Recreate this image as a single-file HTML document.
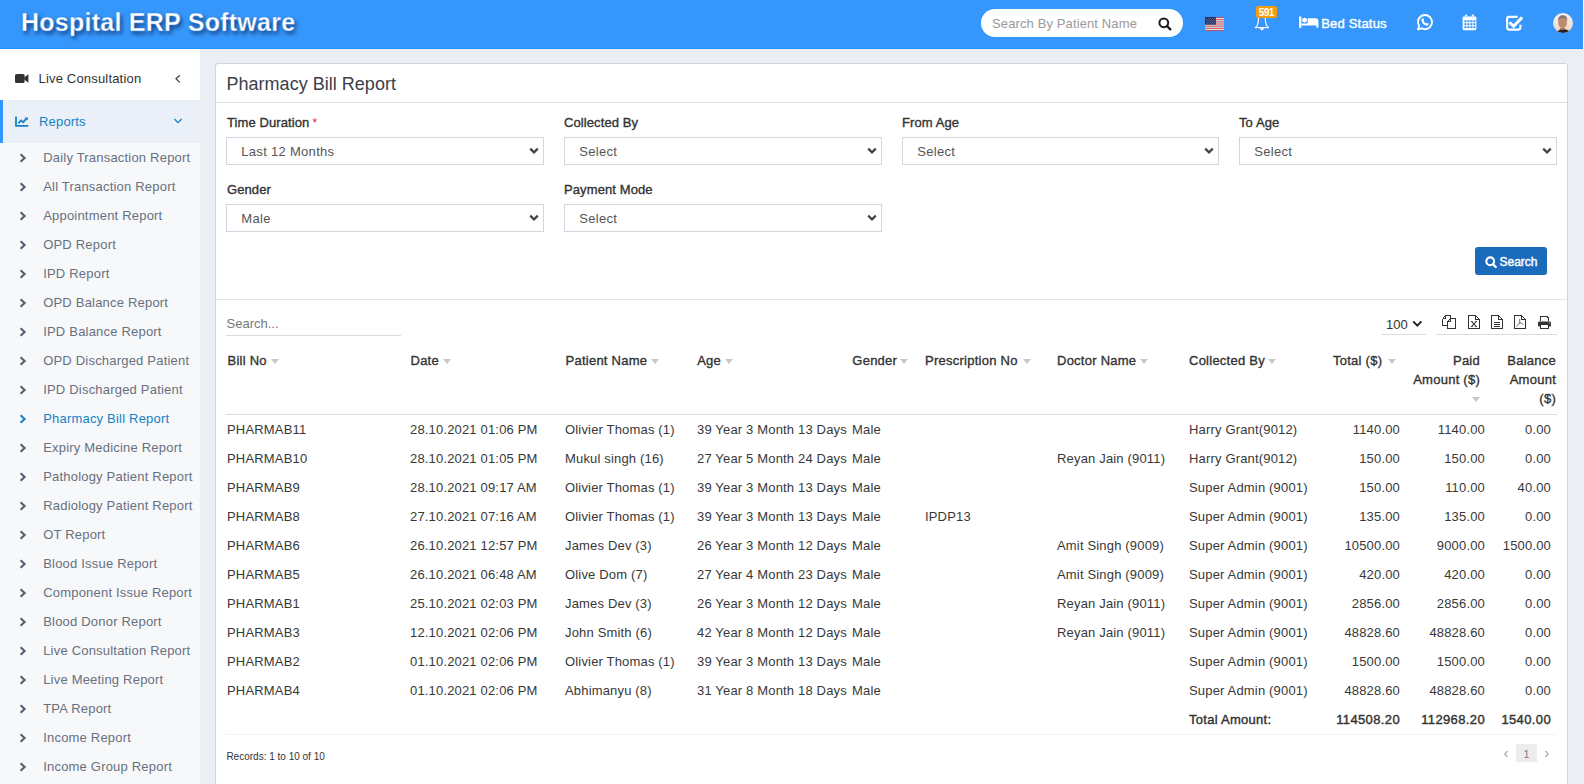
<!DOCTYPE html><html><head><meta charset="utf-8"><title>Pharmacy Bill Report</title><style>
*{margin:0;padding:0;box-sizing:border-box}
html,body{width:1584px;height:784px;overflow:hidden}
body{background:#ebeef2;font-family:"Liberation Sans",sans-serif;font-size:13px;color:#333;position:relative}
.abs{position:absolute}
#hdr{position:absolute;left:0;top:0;width:1583px;height:49px;background:#3597fc;border-bottom:1px solid #2192fd}
#hdrR{position:absolute;left:1583px;top:0;width:1px;height:49px;background:#f4f4f4}
#logo{position:absolute;left:21px;top:9.6px;font-size:25px;line-height:25px;font-weight:bold;color:#fff;letter-spacing:0.25px;text-shadow:2px 2.5px 4px rgba(0,0,40,0.6);-webkit-text-stroke:0.35px #3a8fe8;white-space:nowrap}
#spill{position:absolute;left:981px;top:9px;width:202px;height:28px;background:#fff;border-radius:14px}
#sph{position:absolute;left:992px;top:16.9px;font-size:13px;line-height:13px;color:#9a9a9a;letter-spacing:0.12px;white-space:nowrap}
#badge{position:absolute;left:1256px;top:6px;width:21px;height:12px;background:#fb9c0e;border-radius:2.5px;color:#fff;font-size:10px;line-height:13.8px;font-weight:bold;text-align:center;letter-spacing:-0.6px;text-indent:-0.6px;overflow:hidden}
#bedtxt{position:absolute;left:1321.2px;top:16.8px;font-size:13px;line-height:13px;color:#fff;letter-spacing:0.2px;-webkit-text-stroke:0.4px #fff;white-space:nowrap}
#side{position:absolute;left:0;top:49px;width:200px;height:735px;background:#f7f8fa}
#side .live{position:absolute;left:0;top:0;width:200px;height:51px;background:#fff}
#side .rep{position:absolute;left:0;top:51px;width:200px;height:43px;background:#ebeff7}
#side .bar{position:absolute;left:0;top:51px;width:3px;height:43px;background:#3196fd}
.stxt{position:absolute;font-size:13px;line-height:13px;white-space:nowrap;letter-spacing:0.18px}
#menu .mi{position:absolute;left:0;height:13px;width:200px;font-size:13px;line-height:13px;color:#687080;white-space:nowrap;letter-spacing:0.2px}
#menu .mi span{position:absolute;left:43.2px;top:0}
#menu .mi .chev{position:absolute;left:18.9px;top:2.2px;color:#555d6c}
#menu .mi.act{color:#1482c4}
#menu .mi.act .chev{color:#1482c4}
#box{position:absolute;left:215px;top:63px;width:1353px;height:760px;background:#fff;border:1px solid #c9d7df;border-radius:3px}
#title{position:absolute;left:226.5px;top:74.6px;font-size:18px;line-height:18px;color:#3b4049;white-space:nowrap;letter-spacing:0.02px}
.hline{position:absolute;height:1px}
.lbl{position:absolute;font-size:13px;line-height:13px;color:#333;white-space:nowrap;letter-spacing:0.1px;-webkit-text-stroke:0.35px #333}
.req{color:#e8203c;-webkit-text-stroke:0;font-size:12px;margin-left:3px}
.sel{position:absolute;height:28px;width:318px;border:1px solid #d2d6de;background:#fff}
.sel span{position:absolute;left:14.3px;top:7.0px;font-size:13px;line-height:13px;color:#555;letter-spacing:0.3px;white-space:nowrap}
.sel svg{position:absolute;right:4px;top:9.3px}
#btn{position:absolute;left:1475px;top:247px;width:72px;height:28px;background:#1b6bbd;border-radius:3px}
#btntxt{position:absolute;left:1499.5px;top:255.8px;font-size:12px;line-height:12px;color:#fff;letter-spacing:0px;-webkit-text-stroke:0.4px #fff;white-space:nowrap}
#tsearch{position:absolute;left:226.5px;top:316.8px;font-size:13px;line-height:13px;color:#777;white-space:nowrap}
.th{position:absolute;font-size:13px;line-height:13px;color:#333;white-space:nowrap;letter-spacing:0.25px;-webkit-text-stroke:0.35px #333}
.tri{position:absolute;width:0;height:0;border-left:4px solid transparent;border-right:4px solid transparent;border-top:5px solid #c8c8c8}
.td{position:absolute;font-size:13px;line-height:13px;color:#383838;white-space:nowrap;letter-spacing:0.17px}
.td.tr{text-align:right}
.td.tot{color:#333;letter-spacing:0.27px;-webkit-text-stroke:0.4px #333}
.td.tr.tot{letter-spacing:0.37px}
#recs{position:absolute;left:226.4px;top:751.5px;font-size:10px;line-height:10px;color:#333;white-space:nowrap}
#pg1{position:absolute;left:1516px;top:744px;width:21px;height:18px;background:#ececec;color:#777;font-size:10px;line-height:21px;text-align:center;overflow:hidden}

</style></head><body>
<div id="hdr"></div><div id="hdrR"></div>
<div id="logo">Hospital ERP Software</div>
<div id="spill"></div>
<div id="sph">Search By Patient Name</div>
<svg class="abs" style="left:1157px;top:16px" width="16" height="16" viewBox="0 0 16 16"><circle cx="6.8" cy="6.8" r="4.4" fill="none" stroke="#1a1a1a" stroke-width="2.0"/><path d="M10 10 L13.3 13.3" stroke="#1a1a1a" stroke-width="2.4" stroke-linecap="round"/></svg>
<svg class="abs" style="left:1205px;top:17px" width="19" height="14" viewBox="0 0 19 14"><rect width="19" height="14" fill="#ecebf2"/><g fill="#c2505a"><rect y="0" width="19" height="1.08"/><rect y="2.15" width="19" height="1.08"/><rect y="4.3" width="19" height="1.08"/><rect y="6.46" width="19" height="1.08"/><rect y="8.6" width="19" height="1.08"/><rect y="10.77" width="19" height="1.08"/><rect y="12.92" width="19" height="1.08"/></g><rect width="10.8" height="7.6" fill="#24305e"/><g fill="#8a93b8"><rect x="1.2" y="1.2" width="0.7" height="0.7"/><rect x="3.2" y="1.2" width="0.7" height="0.7"/><rect x="5.2" y="1.2" width="0.7" height="0.7"/><rect x="7.2" y="1.2" width="0.7" height="0.7"/><rect x="9.2" y="1.2" width="0.7" height="0.7"/><rect x="1.2" y="3.2" width="0.7" height="0.7"/><rect x="3.2" y="3.2" width="0.7" height="0.7"/><rect x="5.2" y="3.2" width="0.7" height="0.7"/><rect x="7.2" y="3.2" width="0.7" height="0.7"/><rect x="9.2" y="3.2" width="0.7" height="0.7"/><rect x="1.2" y="5.2" width="0.7" height="0.7"/><rect x="3.2" y="5.2" width="0.7" height="0.7"/><rect x="5.2" y="5.2" width="0.7" height="0.7"/><rect x="7.2" y="5.2" width="0.7" height="0.7"/><rect x="9.2" y="5.2" width="0.7" height="0.7"/><rect x="2.2" y="2.2" width="0.7" height="0.7"/><rect x="4.2" y="2.2" width="0.7" height="0.7"/><rect x="6.2" y="2.2" width="0.7" height="0.7"/><rect x="8.2" y="2.2" width="0.7" height="0.7"/><rect x="2.2" y="4.2" width="0.7" height="0.7"/><rect x="4.2" y="4.2" width="0.7" height="0.7"/><rect x="6.2" y="4.2" width="0.7" height="0.7"/><rect x="8.2" y="4.2" width="0.7" height="0.7"/><rect x="2.2" y="6.2" width="0.7" height="0.7"/><rect x="4.2" y="6.2" width="0.7" height="0.7"/><rect x="6.2" y="6.2" width="0.7" height="0.7"/><rect x="8.2" y="6.2" width="0.7" height="0.7"/></g></svg>
<svg class="abs" style="left:1254px;top:14px" width="16" height="17" viewBox="0 0 16 17"><path d="M5.2 2 C4.6 3 4.4 5 4.2 8 C4 10.6 3.4 12 1.6 13.5 L14.2 13.5 C12.4 12 11.8 10.6 11.6 8 C11.4 5 11.2 3 10.6 2" fill="none" stroke="#fff" stroke-width="1.2" stroke-linejoin="round"/><path d="M0.8 13.1 L15 13.1 L15 14.2 L0.8 14.2 Z" fill="#fff"/><path d="M6 14.2 L9.8 14.2 C9.6 15.6 8.8 16.3 7.9 16.3 C7 16.3 6.2 15.6 6 14.2 Z" fill="#fff"/></svg>
<div id="badge">591</div>
<svg class="abs" style="left:1299px;top:16px" width="20" height="12" viewBox="0 0 20 12"><rect x="0" y="0.5" width="2.4" height="11.3" fill="#fff"/><circle cx="5.6" cy="4.2" r="2.4" fill="#fff"/><path d="M8.6 2.2 L16.8 2.2 C18.4 2.2 19.4 3.4 19.4 5 L19.4 11.8 L17.4 11.8 L17.4 9.6 L2.4 9.6 L2.4 7.4 L8.6 7.4 Z" fill="#fff"/></svg>
<div id="bedtxt">Bed Status</div>
<svg class="abs" style="left:1416px;top:13px" width="18" height="18" viewBox="0 0 18 18"><path d="M9 2 C5.1 2 2 5.1 2 9 C2 10.3 2.4 11.6 3.1 12.7 L2 16.4 L5.7 15.3 C6.7 15.9 7.8 16.2 9 16.2 C12.9 16.2 16 13.1 16 9.1 C16 5.1 12.9 2 9 2 Z" fill="none" stroke="#fff" stroke-width="1.9" stroke-linejoin="round"/><path d="M6.1 5.5 C6.6 5.1 7.2 5.2 7.4 5.7 L8 7.1 C8.1 7.5 7.9 7.8 7.6 8.1 C8 9 8.9 9.9 9.9 10.4 C10.2 10.1 10.5 9.8 10.9 9.9 L12.3 10.6 C12.7 10.8 12.8 11.3 12.5 11.8 C11.9 12.6 11 12.9 9.8 12.5 C7.8 11.8 6.2 10.2 5.6 8.2 C5.3 7 5.5 6 6.1 5.5 Z" fill="#fff"/></svg>
<svg class="abs" style="left:1462px;top:14px" width="15" height="17" viewBox="0 0 15 17"><rect x="0.6" y="2.4" width="13.8" height="13.8" rx="1.4" fill="#fff"/><rect x="3" y="0.6" width="2.2" height="3.6" rx="1" fill="#fff"/><rect x="9.8" y="0.6" width="2.2" height="3.6" rx="1" fill="#fff"/><rect x="3.8" y="2.2" width="0.7" height="1.6" fill="#5aaaf5"/><rect x="10.6" y="2.2" width="0.7" height="1.6" fill="#8a8af0"/><g fill="#3597fc"><rect x="2.4" y="6.2" width="2" height="2"/><rect x="5.4" y="6.2" width="2" height="2"/><rect x="8.4" y="6.2" width="2" height="2"/><rect x="11.4" y="6.2" width="2" height="2"/><rect x="2.4" y="9.2" width="2" height="2"/><rect x="5.4" y="9.2" width="2" height="2"/><rect x="8.4" y="9.2" width="2" height="2"/><rect x="11.4" y="9.2" width="2" height="2"/><rect x="2.4" y="12.2" width="2" height="2"/><rect x="5.4" y="12.2" width="2" height="2"/><rect x="8.4" y="12.2" width="2" height="2"/><rect x="11.4" y="12.2" width="2" height="2"/></g></svg>
<svg class="abs" style="left:1505px;top:15px" width="20" height="16" viewBox="0 0 20 16"><path d="M15.4 9.8 L15.4 12.6 C15.4 13.8 14.6 14.6 13.4 14.6 L4 14.6 C2.8 14.6 2.1 13.8 2.1 12.6 L2.1 3.8 C2.1 2.6 2.8 1.9 4 1.9 L12.6 1.9" fill="none" stroke="#fff" stroke-width="2.1"/><path d="M4.4 7.4 L8.6 11.2 L17.2 2.4" fill="none" stroke="#fff" stroke-width="3"/></svg>
<svg class="abs" style="left:1553px;top:13px" width="20" height="20" viewBox="0 0 20 20"><defs><clipPath id="av"><circle cx="10" cy="10" r="10"/></clipPath><linearGradient id="avbg" x1="0" y1="0" x2="0" y2="1"><stop offset="0" stop-color="#f4f1ee"/><stop offset="0.6" stop-color="#f3e3d8"/><stop offset="1" stop-color="#e9c6bd"/></linearGradient></defs><g clip-path="url(#av)"><rect width="20" height="20" fill="url(#avbg)"/><path d="M7 15 L12 15 L12.5 18 L6.5 18 Z" fill="#b07e62"/><ellipse cx="9.6" cy="9.4" rx="4.4" ry="5.9" fill="#bb8e72"/><path d="M5 8 C4.8 4 7 2.2 9.8 2.2 C12.6 2.2 14.6 4 14.4 8 C13.6 6 12 5 9.8 5 C7.6 5 5.8 6 5 8 Z" fill="#857570"/><path d="M4 20 C5 17 7 16.4 9 17 C11 16 14.5 16 16.5 18.5 L17 20 Z" fill="#2a201c"/></g></svg>

<div id="side"><div class="live"></div><div class="rep"></div><div class="bar"></div></div>
<svg class="abs" style="left:15px;top:73px" width="14" height="11" viewBox="0 0 14 11"><rect x="0" y="1" width="9.6" height="9" rx="1.6" fill="#333"/><path d="M9.4 4.2 L13.4 1.2 L13.4 9.8 L9.4 6.8 Z" fill="#333"/></svg>
<div class="stxt" style="left:38.5px;top:72px;color:#333">Live Consultation</div>
<svg class="abs" style="left:174px;top:74px" width="8" height="10" viewBox="0 0 8 10"><path d="M5.8 1.2 L2 4.8 L5.8 8.4" fill="none" stroke="#444" stroke-width="1.3"/></svg>
<svg class="abs" style="left:15px;top:116px" width="14" height="11" viewBox="0 0 14 11"><path d="M1 0.4 L1 9.8 L13.4 9.8" fill="none" stroke="#1482c4" stroke-width="1.8"/><path d="M3.4 7.4 L6 4.4 L8.2 6.2 L11.6 2.4" fill="none" stroke="#1482c4" stroke-width="1.8"/><path d="M9.6 1.4 L12.8 1.4 L12.8 4.6 Z" fill="#1482c4"/></svg>
<div class="stxt" style="left:39px;top:115px;color:#1482c4">Reports</div>
<svg class="abs" style="left:173px;top:117px" width="10" height="8" viewBox="0 0 10 8"><path d="M1.4 2 L5 5.6 L8.6 2" fill="none" stroke="#1482c4" stroke-width="1.3"/></svg>

<div id="box"></div>
<div id="title">Pharmacy Bill Report</div>
<div class="hline" style="left:216px;top:102px;width:1351px;background:#d8e1e6"></div>

<div class="lbl" style="left:227px;top:115.7px">Time Duration<span class="req">*</span></div>
<div class="lbl" style="left:564px;top:115.7px">Collected By</div>
<div class="lbl" style="left:902px;top:115.7px">From Age</div>
<div class="lbl" style="left:1239px;top:115.7px">To Age</div>
<div class="lbl" style="left:227px;top:183px">Gender</div>
<div class="lbl" style="left:564px;top:183px">Payment Mode</div>

<div class="sel" style="left:226px;top:137px"><span>Last 12 Months</span><svg width="10" height="8" viewBox="0 0 10 8"><path d="M1.2 1.6 L5 5.4 L8.8 1.6" fill="none" stroke="#444" stroke-width="2.2"/></svg></div>
<div class="sel" style="left:564px;top:137px"><span>Select</span><svg width="10" height="8" viewBox="0 0 10 8"><path d="M1.2 1.6 L5 5.4 L8.8 1.6" fill="none" stroke="#444" stroke-width="2.2"/></svg></div>
<div class="sel" style="left:902px;top:137px;width:317px"><span>Select</span><svg width="10" height="8" viewBox="0 0 10 8"><path d="M1.2 1.6 L5 5.4 L8.8 1.6" fill="none" stroke="#444" stroke-width="2.2"/></svg></div>
<div class="sel" style="left:1239px;top:137px"><span>Select</span><svg width="10" height="8" viewBox="0 0 10 8"><path d="M1.2 1.6 L5 5.4 L8.8 1.6" fill="none" stroke="#444" stroke-width="2.2"/></svg></div>
<div class="sel" style="left:226px;top:204px"><span>Male</span><svg width="10" height="8" viewBox="0 0 10 8"><path d="M1.2 1.6 L5 5.4 L8.8 1.6" fill="none" stroke="#444" stroke-width="2.2"/></svg></div>
<div class="sel" style="left:564px;top:204px"><span>Select</span><svg width="10" height="8" viewBox="0 0 10 8"><path d="M1.2 1.6 L5 5.4 L8.8 1.6" fill="none" stroke="#444" stroke-width="2.2"/></svg></div>

<div id="btn"></div>
<svg class="abs" style="left:1484px;top:255px" width="14" height="14" viewBox="0 0 14 14"><circle cx="6.2" cy="6.3" r="3.9" fill="none" stroke="#fff" stroke-width="2.1"/><path d="M9 9.2 L11.8 12" stroke="#fff" stroke-width="2.3" stroke-linecap="round"/></svg>
<div id="btntxt">Search</div>
<div class="hline" style="left:216px;top:299px;width:1351px;background:#dfe6ea"></div>

<div id="tsearch">Search...</div>
<div class="hline" style="left:226px;top:335px;width:175px;background:#dcdcdc"></div>
<div class="abs" style="left:1386px;top:318px;font-size:13px;line-height:13px;color:#333">100</div>
<svg class="abs" style="left:1412px;top:320px" width="11" height="8" viewBox="0 0 11 8"><path d="M1.2 1.4 L5.3 5.6 L9.4 1.4" fill="none" stroke="#222" stroke-width="2"/></svg>
<div class="hline" style="left:1381px;top:334px;width:45px;background:#dcdcdc"></div>
<div class="hline" style="left:1436px;top:334px;width:121px;background:#dcdcdc"></div>
<svg class="abs" style="left:1442px;top:315px" width="15" height="15" viewBox="0 0 15 15" shape-rendering="crispEdges"><path d="M0.5 3.5 L3.5 0.5 L8.5 0.5 L8.5 2.5 M0.5 3.5 L0.5 10.5 L5.5 10.5 M0.5 3.5 L3.5 3.5 L3.5 0.5" fill="none" stroke="#333" stroke-width="1"/><path d="M5.5 6.5 L8.5 3.5 L13.5 3.5 L13.5 13.5 L5.5 13.5 Z M5.5 6.5 L8.5 6.5 L8.5 3.5" fill="none" stroke="#333" stroke-width="1"/></svg>
<svg class="abs" style="left:1468px;top:315px" width="13" height="15" viewBox="0 0 13 15"><path d="M0.5 0.5 L7.5 0.5 L11.5 4.5 L11.5 13.5 L0.5 13.5 Z M7.5 0.5 L7.5 4.5 L11.5 4.5" fill="none" stroke="#333" stroke-width="1" shape-rendering="crispEdges"/><path d="M3.6 6.5 L8.2 11.6 M8.2 6.5 L3.6 11.6" stroke="#333" stroke-width="1.1"/><path d="M2.8 6.5 L4.6 6.5 M7.2 6.5 L9 6.5 M2.8 11.6 L4.6 11.6 M7.2 11.6 L9 11.6" stroke="#333" stroke-width="0.9"/></svg>
<svg class="abs" style="left:1491px;top:315px" width="13" height="15" viewBox="0 0 13 15" shape-rendering="crispEdges"><path d="M0.5 0.5 L7.5 0.5 L11.5 4.5 L11.5 13.5 L0.5 13.5 Z M7.5 0.5 L7.5 4.5 L11.5 4.5" fill="none" stroke="#333" stroke-width="1"/><path d="M3 7.5 L9 7.5 M3 9.5 L9 9.5 M3 11.5 L9 11.5" stroke="#333" stroke-width="1"/></svg>
<svg class="abs" style="left:1514px;top:315px" width="13" height="15" viewBox="0 0 13 15"><path d="M0.5 0.5 L7.5 0.5 L11.5 4.5 L11.5 13.5 L0.5 13.5 Z M7.5 0.5 L7.5 4.5 L11.5 4.5" fill="none" stroke="#333" stroke-width="1" shape-rendering="crispEdges"/><path d="M5.6 4 L5.8 7.6 L2.4 11.6 M5.8 7.6 L9.6 9.6 M5.8 7.6 L5.2 9" fill="none" stroke="#555" stroke-width="0.8"/></svg>
<svg class="abs" style="left:1538px;top:316px" width="13" height="14" viewBox="0 0 13 14"><path d="M2.5 5 L2.5 0.5 L9 0.5 L10.5 2 L10.5 5" fill="none" stroke="#333" stroke-width="1" shape-rendering="crispEdges"/><rect x="0" y="5.6" width="13" height="4.8" rx="1" fill="#333"/><path d="M2.5 9 L2.5 12.5 L10.5 12.5 L10.5 9" fill="#fff" stroke="#333" stroke-width="1" shape-rendering="crispEdges"/><rect x="11" y="6.6" width="1" height="1" fill="#bbb"/></svg>
<div class="th" style="left:227.5px;top:354px">Bill No</div><div class="tri" style="left:271px;top:359px"></div>
<div class="th" style="left:410.5px;top:354px">Date</div><div class="tri" style="left:443px;top:359px"></div>
<div class="th" style="left:565.5px;top:354px">Patient Name</div><div class="tri" style="left:651px;top:359px"></div>
<div class="th" style="left:697.2px;top:354px">Age</div><div class="tri" style="left:725px;top:359px"></div>
<div class="th" style="left:852.3px;top:354px">Gender</div><div class="tri" style="left:900px;top:359px"></div>
<div class="th" style="left:925px;top:354px">Prescription No</div><div class="tri" style="left:1023px;top:359px"></div>
<div class="th" style="left:1057px;top:354px">Doctor Name</div><div class="tri" style="left:1140px;top:359px"></div>
<div class="th" style="left:1189px;top:354px">Collected By</div><div class="tri" style="left:1268px;top:359px"></div>
<div class="th" style="left:1333px;top:354px">Total ($)</div><div class="tri" style="left:1387.5px;top:359px"></div>
<div class="th" style="right:104px;top:354px;text-align:right">Paid</div>
<div class="th" style="right:104px;top:373px;text-align:right">Amount ($)</div>
<div class="tri" style="left:1472px;top:397px"></div>
<div class="th" style="right:28px;top:354px;text-align:right">Balance</div>
<div class="th" style="right:28px;top:373px;text-align:right">Amount</div>
<div class="th" style="right:28px;top:392px;text-align:right">($)</div>
<div class="hline" style="left:226px;top:414px;width:1331px;background:#dddddd"></div>
<div class="hline" style="left:226px;top:734px;width:1331px;background:#f2f2f2"></div>
<div id="recs">Records: 1 to 10 of 10</div>
<svg class="abs" style="left:1503px;top:750px" width="6" height="8" viewBox="0 0 6 8"><path d="M4.6 1 L1.6 4 L4.6 7" fill="none" stroke="#777" stroke-width="1"/></svg>
<div id="pg1">1</div>
<svg class="abs" style="left:1544px;top:750px" width="6" height="8" viewBox="0 0 6 8"><path d="M1.4 1 L4.4 4 L1.4 7" fill="none" stroke="#777" stroke-width="1"/></svg>

<div id="menu"><div class="mi" style="top:150.70px"><svg class="chev" width="8" height="10" viewBox="0 0 8 10"><path d="M1.6 1.2 L5.6 5 L1.6 8.8" fill="none" stroke="currentColor" stroke-width="2.1"/></svg><span>Daily Transaction Report</span></div><div class="mi" style="top:179.70px"><svg class="chev" width="8" height="10" viewBox="0 0 8 10"><path d="M1.6 1.2 L5.6 5 L1.6 8.8" fill="none" stroke="currentColor" stroke-width="2.1"/></svg><span>All Transaction Report</span></div><div class="mi" style="top:208.70px"><svg class="chev" width="8" height="10" viewBox="0 0 8 10"><path d="M1.6 1.2 L5.6 5 L1.6 8.8" fill="none" stroke="currentColor" stroke-width="2.1"/></svg><span>Appointment Report</span></div><div class="mi" style="top:237.70px"><svg class="chev" width="8" height="10" viewBox="0 0 8 10"><path d="M1.6 1.2 L5.6 5 L1.6 8.8" fill="none" stroke="currentColor" stroke-width="2.1"/></svg><span>OPD Report</span></div><div class="mi" style="top:266.70px"><svg class="chev" width="8" height="10" viewBox="0 0 8 10"><path d="M1.6 1.2 L5.6 5 L1.6 8.8" fill="none" stroke="currentColor" stroke-width="2.1"/></svg><span>IPD Report</span></div><div class="mi" style="top:295.70px"><svg class="chev" width="8" height="10" viewBox="0 0 8 10"><path d="M1.6 1.2 L5.6 5 L1.6 8.8" fill="none" stroke="currentColor" stroke-width="2.1"/></svg><span>OPD Balance Report</span></div><div class="mi" style="top:324.70px"><svg class="chev" width="8" height="10" viewBox="0 0 8 10"><path d="M1.6 1.2 L5.6 5 L1.6 8.8" fill="none" stroke="currentColor" stroke-width="2.1"/></svg><span>IPD Balance Report</span></div><div class="mi" style="top:353.70px"><svg class="chev" width="8" height="10" viewBox="0 0 8 10"><path d="M1.6 1.2 L5.6 5 L1.6 8.8" fill="none" stroke="currentColor" stroke-width="2.1"/></svg><span>OPD Discharged Patient</span></div><div class="mi" style="top:382.70px"><svg class="chev" width="8" height="10" viewBox="0 0 8 10"><path d="M1.6 1.2 L5.6 5 L1.6 8.8" fill="none" stroke="currentColor" stroke-width="2.1"/></svg><span>IPD Discharged Patient</span></div><div class="mi act" style="top:411.70px"><svg class="chev" width="8" height="10" viewBox="0 0 8 10"><path d="M1.6 1.2 L5.6 5 L1.6 8.8" fill="none" stroke="currentColor" stroke-width="2.1"/></svg><span>Pharmacy Bill Report</span></div><div class="mi" style="top:440.70px"><svg class="chev" width="8" height="10" viewBox="0 0 8 10"><path d="M1.6 1.2 L5.6 5 L1.6 8.8" fill="none" stroke="currentColor" stroke-width="2.1"/></svg><span>Expiry Medicine Report</span></div><div class="mi" style="top:469.70px"><svg class="chev" width="8" height="10" viewBox="0 0 8 10"><path d="M1.6 1.2 L5.6 5 L1.6 8.8" fill="none" stroke="currentColor" stroke-width="2.1"/></svg><span>Pathology Patient Report</span></div><div class="mi" style="top:498.70px"><svg class="chev" width="8" height="10" viewBox="0 0 8 10"><path d="M1.6 1.2 L5.6 5 L1.6 8.8" fill="none" stroke="currentColor" stroke-width="2.1"/></svg><span>Radiology Patient Report</span></div><div class="mi" style="top:527.70px"><svg class="chev" width="8" height="10" viewBox="0 0 8 10"><path d="M1.6 1.2 L5.6 5 L1.6 8.8" fill="none" stroke="currentColor" stroke-width="2.1"/></svg><span>OT Report</span></div><div class="mi" style="top:556.70px"><svg class="chev" width="8" height="10" viewBox="0 0 8 10"><path d="M1.6 1.2 L5.6 5 L1.6 8.8" fill="none" stroke="currentColor" stroke-width="2.1"/></svg><span>Blood Issue Report</span></div><div class="mi" style="top:585.70px"><svg class="chev" width="8" height="10" viewBox="0 0 8 10"><path d="M1.6 1.2 L5.6 5 L1.6 8.8" fill="none" stroke="currentColor" stroke-width="2.1"/></svg><span>Component Issue Report</span></div><div class="mi" style="top:614.70px"><svg class="chev" width="8" height="10" viewBox="0 0 8 10"><path d="M1.6 1.2 L5.6 5 L1.6 8.8" fill="none" stroke="currentColor" stroke-width="2.1"/></svg><span>Blood Donor Report</span></div><div class="mi" style="top:643.70px"><svg class="chev" width="8" height="10" viewBox="0 0 8 10"><path d="M1.6 1.2 L5.6 5 L1.6 8.8" fill="none" stroke="currentColor" stroke-width="2.1"/></svg><span>Live Consultation Report</span></div><div class="mi" style="top:672.70px"><svg class="chev" width="8" height="10" viewBox="0 0 8 10"><path d="M1.6 1.2 L5.6 5 L1.6 8.8" fill="none" stroke="currentColor" stroke-width="2.1"/></svg><span>Live Meeting Report</span></div><div class="mi" style="top:701.70px"><svg class="chev" width="8" height="10" viewBox="0 0 8 10"><path d="M1.6 1.2 L5.6 5 L1.6 8.8" fill="none" stroke="currentColor" stroke-width="2.1"/></svg><span>TPA Report</span></div><div class="mi" style="top:730.70px"><svg class="chev" width="8" height="10" viewBox="0 0 8 10"><path d="M1.6 1.2 L5.6 5 L1.6 8.8" fill="none" stroke="currentColor" stroke-width="2.1"/></svg><span>Income Report</span></div><div class="mi" style="top:759.70px"><svg class="chev" width="8" height="10" viewBox="0 0 8 10"><path d="M1.6 1.2 L5.6 5 L1.6 8.8" fill="none" stroke="currentColor" stroke-width="2.1"/></svg><span>Income Group Report</span></div></div>
<div id="tbody"><div class="td" style="left:227px;top:422.80px">PHARMAB11</div><div class="td" style="left:410px;top:422.80px">28.10.2021 01:06 PM</div><div class="td" style="left:565px;top:422.80px">Olivier Thomas (1)</div><div class="td" style="left:697px;top:422.80px">39 Year 3 Month 13 Days</div><div class="td" style="left:852px;top:422.80px">Male</div><div class="td" style="left:1189px;top:422.80px">Harry Grant(9012)</div><div class="td tr" style="right:184px;top:422.80px">1140.00</div><div class="td tr" style="right:99px;top:422.80px">1140.00</div><div class="td tr" style="right:33px;top:422.80px">0.00</div><div class="td" style="left:227px;top:451.80px">PHARMAB10</div><div class="td" style="left:410px;top:451.80px">28.10.2021 01:05 PM</div><div class="td" style="left:565px;top:451.80px">Mukul singh (16)</div><div class="td" style="left:697px;top:451.80px">27 Year 5 Month 24 Days</div><div class="td" style="left:852px;top:451.80px">Male</div><div class="td" style="left:1057px;top:451.80px">Reyan Jain (9011)</div><div class="td" style="left:1189px;top:451.80px">Harry Grant(9012)</div><div class="td tr" style="right:184px;top:451.80px">150.00</div><div class="td tr" style="right:99px;top:451.80px">150.00</div><div class="td tr" style="right:33px;top:451.80px">0.00</div><div class="td" style="left:227px;top:480.80px">PHARMAB9</div><div class="td" style="left:410px;top:480.80px">28.10.2021 09:17 AM</div><div class="td" style="left:565px;top:480.80px">Olivier Thomas (1)</div><div class="td" style="left:697px;top:480.80px">39 Year 3 Month 13 Days</div><div class="td" style="left:852px;top:480.80px">Male</div><div class="td" style="left:1189px;top:480.80px">Super Admin (9001)</div><div class="td tr" style="right:184px;top:480.80px">150.00</div><div class="td tr" style="right:99px;top:480.80px">110.00</div><div class="td tr" style="right:33px;top:480.80px">40.00</div><div class="td" style="left:227px;top:509.80px">PHARMAB8</div><div class="td" style="left:410px;top:509.80px">27.10.2021 07:16 AM</div><div class="td" style="left:565px;top:509.80px">Olivier Thomas (1)</div><div class="td" style="left:697px;top:509.80px">39 Year 3 Month 13 Days</div><div class="td" style="left:852px;top:509.80px">Male</div><div class="td" style="left:925px;top:509.80px">IPDP13</div><div class="td" style="left:1189px;top:509.80px">Super Admin (9001)</div><div class="td tr" style="right:184px;top:509.80px">135.00</div><div class="td tr" style="right:99px;top:509.80px">135.00</div><div class="td tr" style="right:33px;top:509.80px">0.00</div><div class="td" style="left:227px;top:538.80px">PHARMAB6</div><div class="td" style="left:410px;top:538.80px">26.10.2021 12:57 PM</div><div class="td" style="left:565px;top:538.80px">James Dev (3)</div><div class="td" style="left:697px;top:538.80px">26 Year 3 Month 12 Days</div><div class="td" style="left:852px;top:538.80px">Male</div><div class="td" style="left:1057px;top:538.80px">Amit Singh (9009)</div><div class="td" style="left:1189px;top:538.80px">Super Admin (9001)</div><div class="td tr" style="right:184px;top:538.80px">10500.00</div><div class="td tr" style="right:99px;top:538.80px">9000.00</div><div class="td tr" style="right:33px;top:538.80px">1500.00</div><div class="td" style="left:227px;top:567.80px">PHARMAB5</div><div class="td" style="left:410px;top:567.80px">26.10.2021 06:48 AM</div><div class="td" style="left:565px;top:567.80px">Olive Dom (7)</div><div class="td" style="left:697px;top:567.80px">27 Year 4 Month 23 Days</div><div class="td" style="left:852px;top:567.80px">Male</div><div class="td" style="left:1057px;top:567.80px">Amit Singh (9009)</div><div class="td" style="left:1189px;top:567.80px">Super Admin (9001)</div><div class="td tr" style="right:184px;top:567.80px">420.00</div><div class="td tr" style="right:99px;top:567.80px">420.00</div><div class="td tr" style="right:33px;top:567.80px">0.00</div><div class="td" style="left:227px;top:596.80px">PHARMAB1</div><div class="td" style="left:410px;top:596.80px">25.10.2021 02:03 PM</div><div class="td" style="left:565px;top:596.80px">James Dev (3)</div><div class="td" style="left:697px;top:596.80px">26 Year 3 Month 12 Days</div><div class="td" style="left:852px;top:596.80px">Male</div><div class="td" style="left:1057px;top:596.80px">Reyan Jain (9011)</div><div class="td" style="left:1189px;top:596.80px">Super Admin (9001)</div><div class="td tr" style="right:184px;top:596.80px">2856.00</div><div class="td tr" style="right:99px;top:596.80px">2856.00</div><div class="td tr" style="right:33px;top:596.80px">0.00</div><div class="td" style="left:227px;top:625.80px">PHARMAB3</div><div class="td" style="left:410px;top:625.80px">12.10.2021 02:06 PM</div><div class="td" style="left:565px;top:625.80px">John Smith (6)</div><div class="td" style="left:697px;top:625.80px">42 Year 8 Month 12 Days</div><div class="td" style="left:852px;top:625.80px">Male</div><div class="td" style="left:1057px;top:625.80px">Reyan Jain (9011)</div><div class="td" style="left:1189px;top:625.80px">Super Admin (9001)</div><div class="td tr" style="right:184px;top:625.80px">48828.60</div><div class="td tr" style="right:99px;top:625.80px">48828.60</div><div class="td tr" style="right:33px;top:625.80px">0.00</div><div class="td" style="left:227px;top:654.80px">PHARMAB2</div><div class="td" style="left:410px;top:654.80px">01.10.2021 02:06 PM</div><div class="td" style="left:565px;top:654.80px">Olivier Thomas (1)</div><div class="td" style="left:697px;top:654.80px">39 Year 3 Month 13 Days</div><div class="td" style="left:852px;top:654.80px">Male</div><div class="td" style="left:1189px;top:654.80px">Super Admin (9001)</div><div class="td tr" style="right:184px;top:654.80px">1500.00</div><div class="td tr" style="right:99px;top:654.80px">1500.00</div><div class="td tr" style="right:33px;top:654.80px">0.00</div><div class="td" style="left:227px;top:683.80px">PHARMAB4</div><div class="td" style="left:410px;top:683.80px">01.10.2021 02:06 PM</div><div class="td" style="left:565px;top:683.80px">Abhimanyu (8)</div><div class="td" style="left:697px;top:683.80px">31 Year 8 Month 18 Days</div><div class="td" style="left:852px;top:683.80px">Male</div><div class="td" style="left:1189px;top:683.80px">Super Admin (9001)</div><div class="td tr" style="right:184px;top:683.80px">48828.60</div><div class="td tr" style="right:99px;top:683.80px">48828.60</div><div class="td tr" style="right:33px;top:683.80px">0.00</div><div class="td tot" style="left:1189px;top:712.80px">Total Amount:</div><div class="td tr tot" style="right:184px;top:712.80px">114508.20</div><div class="td tr tot" style="right:99px;top:712.80px">112968.20</div><div class="td tr tot" style="right:33px;top:712.80px">1540.00</div></div>
</body></html>
